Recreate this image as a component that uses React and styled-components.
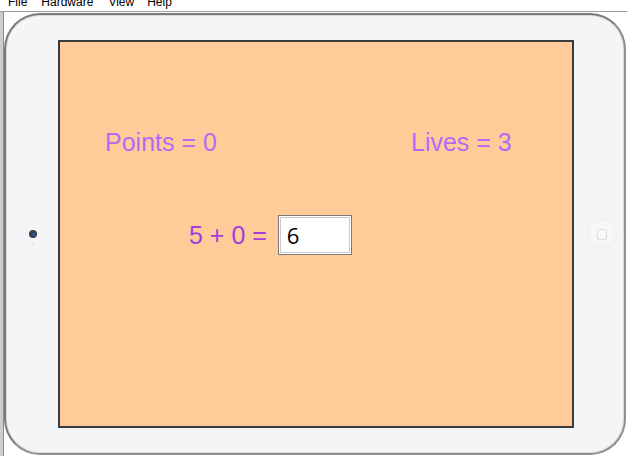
import React from "react";
import styled, { createGlobalStyle } from "styled-components";

const Global = createGlobalStyle`
  html, body { margin: 0; padding: 0; background: #ffffff; }
  body { font-family: "Liberation Sans", Arial, sans-serif; }
`;

const Page = styled.div`
  width: 627px;
  height: 456px;
  overflow: hidden;
  background: #ffffff;
  display: flex;
  flex-direction: column;
`;

const MenuBar = styled.div`
  height: 11px;
  flex: none;
  display: flex;
  overflow: hidden;
  border-bottom: 1px solid #9c9c9c;
  background: #ffffff;
`;

const MenuItem = styled.span`
  font-family: "Liberation Sans", Arial, sans-serif;
  font-size: 12px;
  line-height: 14px;
  color: #000;
  margin-top: -5px;
  margin-left: ${(p) => p.$ml}px;
`;

const Content = styled.div`
  flex: 1;
  display: flex;
  border-left: 3px solid #cdcdcd;
  box-shadow: inset 1px 0 0 #8c8c8c;
  padding: 1px 1px 2px 1px;
`;

const Device = styled.div`
  width: 618px;
  height: 438px;
  border: 2px solid #8e8e8e;
  border-top-color: #7a7a7a;
  border-left-color: #7a7a7a;
  border-radius: 36px;
  background: #f4f5f7;
  box-shadow: inset 0 0 0 1px #dadbdd;
  display: flex;
  align-items: center;
`;

const LeftBezel = styled.div`
  width: 52px;
  align-self: stretch;
  display: flex;
  flex-direction: column;
  align-items: center;
  justify-content: center;
  padding-left: 2px;
  padding-top: 8px;
  box-sizing: border-box;
  gap: 5px;
`;

const Camera = styled.div`
  width: 8px;
  height: 8px;
  border-radius: 50%;
  background: #3a3e46;
  display: flex;
  align-items: center;
  justify-content: center;
  &::after {
    content: "";
    width: 3px;
    height: 3px;
    border-radius: 50%;
    background: #1f5fb0;
  }
`;

const Sensor = styled.div`
  width: 3px;
  height: 3px;
  border-radius: 50%;
  background: #e4e5e8;
`;

const Screen = styled.div`
  width: 512px;
  height: 384px;
  flex: none;
  border: 2px solid #3a3b3d;
  background: #ffcc99;
  display: flex;
  flex-direction: column;
`;

const RightBezel = styled.div`
  flex: 1;
  align-self: stretch;
  display: flex;
  align-items: center;
  justify-content: center;
  padding-left: 6px;
`;

const HomeButton = styled.div`
  width: 28px;
  height: 28px;
  border-radius: 50%;
  background: radial-gradient(circle at 50% 40%, #fbfbfc 0%, #f0f1f3 100%);
  box-shadow: 0 0 0 1px #ebecef;
  display: flex;
  align-items: center;
  justify-content: center;
  &::after {
    content: "";
    width: 8px;
    height: 9px;
    border: 1.5px solid #dcdde1;
    border-radius: 2px;
  }
`;

const ScoreRow = styled.div`
  display: grid;
  grid-template-columns: 306px auto;
  padding: 86px 0 0 45px;
`;

const Label = styled.div`
  font-family: "Liberation Sans", Arial, sans-serif;
  font-size: 25px;
  line-height: 29px;
  color: ${(p) => p.$color};
  white-space: nowrap;
`;

const EquationRow = styled.div`
  display: flex;
  align-items: center;
  gap: 11px;
  padding-left: 129px;
  margin-top: 58px;
`;

const Answer = styled.input`
  width: 74px;
  height: 40px;
  box-sizing: border-box;
  border: 1px solid #7a7a7a;
  box-shadow: inset 0 0 0 1px #ffffff, inset 0 0 0 2px #c9c9c9;
  background: #ffffff;
  padding: 0 0 0 8px;
  font-family: "Open Sans", "Noto Sans", sans-serif;
  font-size: 22px;
  color: #000;
  outline: none;
`;

export default function App() {
  return (
    <>
      <Global />
      <Page>
        <MenuBar>
          <MenuItem $ml={8}>File</MenuItem>
          <MenuItem $ml={14}>Hardware</MenuItem>
          <MenuItem $ml={15}>View</MenuItem>
          <MenuItem $ml={13}>Help</MenuItem>
        </MenuBar>
        <Content>
          <Device>
            <LeftBezel>
              <Camera />
              <Sensor />
            </LeftBezel>
            <Screen>
              <ScoreRow>
                <Label $color="#b26bf5">Points = 0</Label>
                <Label $color="#b26bf5">Lives = 3</Label>
              </ScoreRow>
              <EquationRow>
                <Label $color="#a23cdb">5 + 0 =</Label>
                <Answer defaultValue="6" />
              </EquationRow>
            </Screen>
            <RightBezel>
              <HomeButton />
            </RightBezel>
          </Device>
        </Content>
      </Page>
    </>
  );
}
